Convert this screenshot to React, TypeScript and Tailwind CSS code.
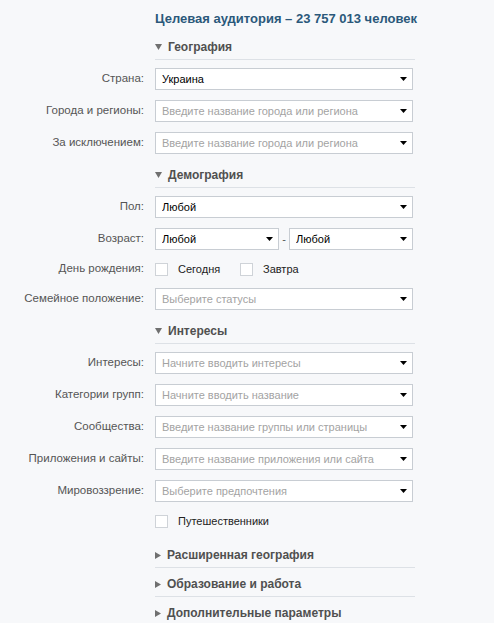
import React from "react";

const font = { fontFamily: '"Liberation Sans", Arial, sans-serif' };

const Arrow = () => (
  <svg width="7" height="4" viewBox="0 0 7 4" className="shrink-0">
    <path d="M0 0h7L3.5 4z" fill="#000" />
  </svg>
);

function Select({ value, placeholder, className = "w-[258px]" }: { value?: string; placeholder?: string; className?: string }) {
  return (
    <div className={`${className} h-[22px] bg-white border border-[#c8cdd3] flex items-center pl-[6px] pr-[5px]`}>
      <span className={`flex-1 truncate text-[11px] ${value ? "text-black" : "text-[#a3a3a3]"}`}>
        {value ?? placeholder}
      </span>
      <Arrow />
    </div>
  );
}

function Row({ label, children, tall = true }: { label?: string; children: React.ReactNode; tall?: boolean }) {
  return (
    <div className={`flex items-center ${tall ? "h-[32px]" : "h-[28px]"}`}>
      <div className="w-[144px] text-right text-[11.5px] text-[#555]">{label}</div>
      <div className="ml-[11px] flex items-center">{children}</div>
    </div>
  );
}

function Check({ label, className = "" }: { label: string; className?: string }) {
  return (
    <div className={`flex items-center ${className}`}>
      <div className="w-[13px] h-[13px] bg-white border border-[#cfd3d8]" />
      <span className="ml-[10px] text-[11px] text-[#222]">{label}</span>
    </div>
  );
}

function Header({ title, open = true, className = "mt-[4px]" }: { title: string; open?: boolean; className?: string }) {
  return (
    <div className={`ml-[155px] w-[260px] h-[25px] border-b border-[#dde1e6] flex items-center ${className}`}>
      {open ? (
        <svg width="7" height="6" viewBox="0 0 7 6">
          <path d="M0 0h7L3.5 6z" fill="#707070" />
        </svg>
      ) : (
        <svg width="6" height="7" viewBox="0 0 6 7">
          <path d="M0 0v7l6-3.5z" fill="#707070" />
        </svg>
      )}
      <span className="ml-[6px] text-[12px] font-bold text-[#505050]">{title}</span>
    </div>
  );
}

export default function App() {
  return (
    <div style={font} className="w-[494px] h-[623px] overflow-hidden bg-[#f7f8fa]">
      <div className="h-[35px] pl-[155px] flex items-center pt-[1px]">
        <span className="text-[13px] font-bold text-[#2b587a] leading-none">
          Целевая аудитория – 23 757 013 человек
        </span>
      </div>

      <Header title="География" className="" />
      <div className="mt-[3px]">
        <Row label="Страна:"><Select value="Украина" /></Row>
        <Row label="Города и регионы:"><Select placeholder="Введите название города или региона" /></Row>
        <Row label="За исключением:"><Select placeholder="Введите название города или региона" /></Row>
      </div>

      <Header title="Демография" />
      <div className="mt-[3px]">
        <Row label="Пол:"><Select value="Любой" /></Row>
        <Row label="Возраст:">
          <Select value="Любой" className="w-[124px]" />
          <span className="w-[10px] text-center text-[11px] text-[#555]">-</span>
          <Select value="Любой" className="w-[124px]" />
        </Row>
        <Row label="День рождения:" tall={false}>
          <Check label="Сегодня" className="w-[85px]" />
          <Check label="Завтра" />
        </Row>
        <Row label="Семейное положение:"><Select placeholder="Выберите статусы" /></Row>
      </div>

      <Header title="Интересы" />
      <div className="mt-[3px]">
        <Row label="Интересы:"><Select placeholder="Начните вводить интересы" /></Row>
        <Row label="Категории групп:"><Select placeholder="Начните вводить название" /></Row>
        <Row label="Сообщества:"><Select placeholder="Введите название группы или страницы" /></Row>
        <Row label="Приложения и сайты:"><Select placeholder="Введите название приложения или сайта" /></Row>
        <Row label="Мировоззрение:"><Select placeholder="Выберите предпочтения" /></Row>
        <Row tall={false}><Check label="Путешественники" /></Row>
      </div>

      <Header title="Расширенная география" open={false} className="mt-[8px]" />
      <Header title="Образование и работа" open={false} />
      <Header title="Дополнительные параметры" open={false} />
    </div>
  );
}
